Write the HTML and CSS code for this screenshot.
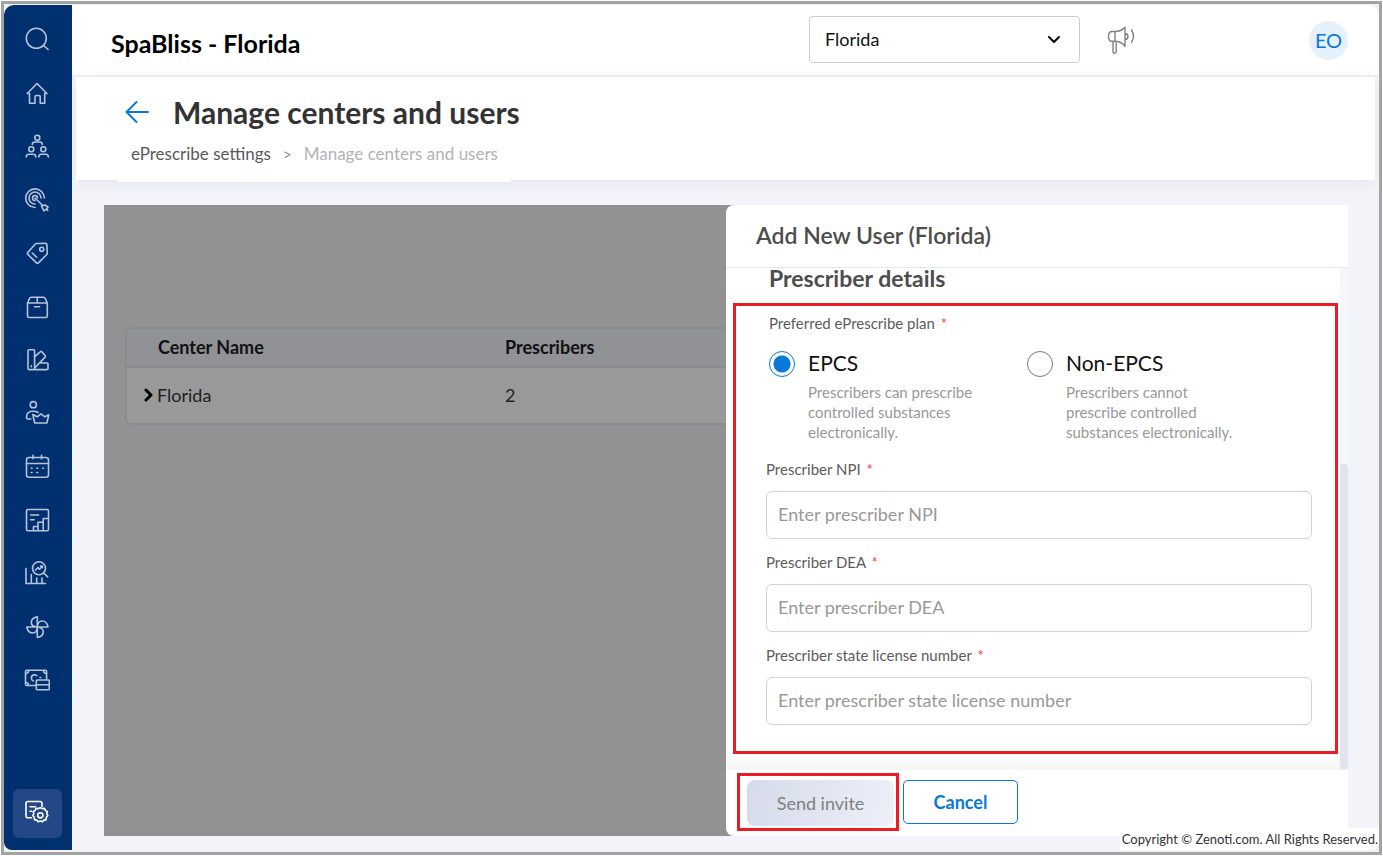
FILE: index.html
```html
<!DOCTYPE html>
<html lang="en">
<head>
<meta charset="UTF-8">
<title>Manage centers and users</title>
<link rel="stylesheet" href="styles.css">
</head>
<body>
<div class="frame">
	<aside class="sidebar">
		<nav class="nav">
			<a href="#" aria-label="Search"><svg class="icon" viewBox="0 0 26 26"><circle cx="12.3" cy="12.3" r="10"/><path d="M19.5 19.5l4.6 4"/></svg></a>
			<a href="#" aria-label="Home"><svg class="icon" viewBox="0 0 26 26"><path d="M5.5 13.5H3.3L13 3.5l9.9 10h-2.2v9.8h-4.5v-6.5q0-1.3-1.3-1.3h-2.6q-1.3 0-1.3 1.3v6.5H5.5z"/></svg></a>
			<a href="#" aria-label="Employees"><svg class="icon" viewBox="0 0 26 26"><circle cx="13.3" cy="3.7" r="2.5"/><circle cx="7.3" cy="15.2" r="2.5"/><circle cx="19.3" cy="15.2" r="2.5"/><path d="M8.3 10.5q0-2.500 2.500-2.500h5q2.500 0 2.500 2.500M2.300 23q0-2.700 2.500-2.700h4.500q2.500 0 2.500 2.700M14.800 23q0-2.700 2.500-2.700h4.500q2.500 0 2.500 2.700"/></svg></a>
			<a href="#" aria-label="Marketing"><svg class="icon" viewBox="0 0 26 26"><path d="M11 20.500a9.300 9.300 0 1 1 9.300-9.500M11 17a6 6 0 1 1 6-6M11 13.500a2.500 2.500 0 1 1 2.500-2.500M11 11l8 7.800M22.300 22l1.500 1.500M17.500 19l3.500-1 3 2-1.500 2.300-2.700 1.500z"/></svg></a>
			<a href="#" aria-label="Offers"><svg class="icon" viewBox="0 0 26 26"><path d="M12.500 3.500l9-.3q1.300 0 1.400 1.300l.4 8.500q0 1-.7 1.700l-8.200 8.200q-1 1-2 0l-8.500-8.500q-1-1 0-2l7.200-8.200q.6-.7 1.400-.7zM8.300 13l4.300 4.300"/><circle cx="17.700" cy="9.200" r="2"/></svg></a>
			<a href="#" aria-label="Inventory"><svg class="icon" viewBox="0 0 26 26"><path d="M3.500 9h19.800v13q0 1.500-1.500 1.500H5q-1.500 0-1.500-1.500zM3.500 9l2-4.500q.5-1.200 1.800-1.200h12.200q1.300 0 1.800 1.200l2 4.500M13.300 3.500V9M10.600 12.700h5"/></svg></a>
			<a href="#" aria-label="Catalog"><svg class="icon" viewBox="0 0 26 26"><path d="M4 3.800q0-1 1-1h4.600q1 0 1 1v18.800H5q-1 0-1-1zM10.600 9.800l5.600-5q.8-.8 1.600 0l3.300 3.700q.7.800 0 1.600L10.600 21M15.800 16H23q1 0 1 1v4.600q0 1-1 1H9.600M7.300 18.800v1"/></svg></a>
			<a href="#" aria-label="Guests"><svg class="icon" viewBox="0 0 26 26"><circle cx="9.300" cy="4.700" r="3.100"/><path d="M6.800 19H4.300Q2.500 19 2.500 17q0-5.800 6.500-5.800 3 0 5 1.300M8.800 14.500l4.400 2.300 3.800-3 3.800 3 4-2-2 8.200H10.700z"/></svg></a>
			<a href="#" aria-label="Appointments"><svg class="icon" viewBox="0 0 26 26"><rect x="2.500" y="3.500" width="22" height="19.800" rx="2.500"/><path d="M2.500 9.500h22M9 1.200v3.500M17.500 1.200v3.500M7.200 14.200h.8M12.800 14.200h.8M18.800 14.200h.8M7.200 18.500h.8M12.800 18.500h.8"/></svg></a>
			<a href="#" aria-label="Reports"><svg class="icon" viewBox="0 0 26 26"><rect x="2.500" y="2.500" width="22" height="21.200" rx="1.500"/><path d="M6.600 8h8M6.600 12.700h3.600M9.500 23.500v-4H14M14 23.500V15.300h5.200M19.200 23.500v-12h5"/></svg></a>
			<a href="#" aria-label="Analytics"><svg class="icon" viewBox="0 0 26 26"><path d="M2 8.500v15h19.500M7.300 14.500v9M12.700 18v5.500M18 18v5.500M19.700 13l4 3.800M11.500 10l2.500-2.500 1.500 1.700 2.800-3M16.500 6h1.800v1.800"/><circle cx="15" cy="8.300" r="6.500"/></svg></a>
			<a href="#" aria-label="Automation"><svg class="icon" viewBox="0 0 26 26"><path d="M13.300 13V2.700q-6 1-6 5.800 0 4 6 4.500zM13.300 13H24q-1-6-6-6-4.200 0-4.700 6zM13.300 13v10.500q6-1 6-5.800 0-4-6-4.700zM13.300 13H2.800q1 6 6 6 4.200 0 4.500-6z"/></svg></a>
			<a href="#" aria-label="Payments"><svg class="icon" viewBox="0 0 26 26"><path d="M11.500 18.500H2.700q-1.200 0-1.200-1.200V4.500q0-1.200 1.200-1.200h18.700q1.200 0 1.200 1.200V12M12.800 8.600q-1-.8-2.200-.8-3.200.1-3.200 3.200 0 2.300 2 3M1.700 6.500q2.800 0 3-3M19.400 3.500q.2 3 3 3M1.700 15.500q2.800 0 3 3M16 10.500h.8"/><rect x="12.300" y="13" width="13" height="9.800" rx="1"/><path d="M12.300 17.800h13"/></svg></a>
		</nav>
		<a class="settings" href="#" aria-label="Configuration"><svg class="icon" viewBox="0 0 26 26"><path d="M7.500 18.700H4q-2 0-2-2V4.500q0-2 2-2h12q2 0 2 2v3M6 7.800h5.500M6 12.200h1.800"/><path d="M16.300 8.700l2 .9 2.200-.2.9 2 1.900 1.200-.5 2.100 1 2-1.500 1.600-.2 2.300-2.200.5-1.400 1.700-2.200-.8-2.200.8-1.400-1.700-2.200-.5-.2-2.300-1.500-1.600 1-2-.5-2.100 1.900-1.200.9-2 2.200.2z"/><circle cx="16.300" cy="16.300" r="2.600"/></svg></a>
	</aside>
	<div class="main">
		<header class="topbar">
			<h2 class="brand">SpaBliss - Florida</h2>
			<div class="select-wrap">
				<select class="center-select" aria-label="Center"><option>Florida</option></select>
				<svg class="chevron" viewBox="0 0 14 10"><path d="M2 2l5 5 5-5"/></svg>
			</div>
			<button class="announce" aria-label="Announcements"><svg viewBox="0 0 28 30"><path d="M5 6.500h3v9.800H5q-3.500 0-3.500-4.900T5 6.500zM8 6.500q6 0 10-4.300v19q-4-4.900-10-4.900M6 16.500v10.300q0 1.500 1.500 1.500T9.200 26.800V16.500M18 8.500q3 .2 3 3t-3 3.200M24.500 5q4 6 0 12.500"/></svg></button>
			<button class="avatar">EO</button>
		</header>
		<section class="page-head">
			<div class="title-row">
				<a class="back" href="#" aria-label="Back"><svg viewBox="0 0 24 22"><path d="M23 11H2M11.500 1L1.500 11l10 10"/></svg></a>
				<h1 class="title">Manage centers and users</h1>
			</div>
			<div class="crumbs">
				<a href="#">ePrescribe settings</a>
				<span class="sep">&gt;</span>
				<span>Manage centers and users</span>
			</div>
		</section>
		<section class="content">
			<div class="centers">
				<table class="centers-table">
					<thead>
						<tr><th class="name">Center Name</th><th>Prescribers</th></tr>
					</thead>
					<tbody>
						<tr>
							<td><button class="expand"><svg viewBox="0 0 10 14"><path d="M2 2l5 5-5 5"/></svg>Florida</button></td>
							<td>2</td>
						</tr>
					</tbody>
				</table>
			</div>
			<form class="drawer">
				<h2 class="drawer-head">Add New User (Florida)</h2>
				<div class="drawer-body">
					<div class="drawer-scroll">
						<h3 class="section-title">Prescriber details</h3>
						<div class="details marked">
							<div class="plan-group">
								<div class="field-label" id="plan">Preferred ePrescribe plan <span class="req">*</span></div>
								<div class="plans" role="radiogroup" aria-labelledby="plan">
									<label class="plan">
										<input type="radio" name="plan" checked>
										<span class="plan-name">EPCS</span>
										<span class="plan-text">Prescribers can prescribe controlled substances electronically.</span>
									</label>
									<label class="plan">
										<input type="radio" name="plan">
										<span class="plan-name">Non-EPCS</span>
										<span class="plan-text">Prescribers cannot prescribe controlled substances electronically.</span>
									</label>
								</div>
							</div>
							<div class="field">
								<label class="field-label" for="npi">Prescriber NPI <span class="req">*</span></label>
								<input class="text" type="text" id="npi" placeholder="Enter prescriber NPI">
							</div>
							<div class="field">
								<label class="field-label" for="dea">Prescriber DEA <span class="req">*</span></label>
								<input class="text" type="text" id="dea" placeholder="Enter prescriber DEA">
							</div>
							<div class="field">
								<label class="field-label" for="license">Prescriber state license number <span class="req">*</span></label>
								<input class="text" type="text" id="license" placeholder="Enter prescriber state license number">
							</div>
						</div>
					</div>
					<div class="track"><div class="thumb"></div></div>
				</div>
				<div class="drawer-foot">
					<div class="send-wrap marked"><button type="submit" class="send" disabled>Send invite</button></div>
					<button type="button" class="cancel">Cancel</button>
				</div>
			</form>
		</section>
	</div>
	<footer class="copyright">Copyright © Zenoti.com. All Rights Reserved.</footer>
</div>
</body>
</html>
```
FILE: styles.css
```css
*{
	box-sizing: border-box;
}
body{
	margin: 0;
	padding: 1px;
	background: #fff;
	font-family: Lato, "Liberation Sans", sans-serif;
	color: #333;
}
h1, h2, h3{
	margin: 0;
}
a{
	color: inherit;
	text-decoration: none;
}
button, input, select{
	font-family: inherit;
}
button{
	padding: 0;
	border: 0;
	background: none;
	cursor: pointer;
}
svg{
	display: block;
	fill: none;
	stroke: currentColor;
	stroke-linecap: round;
	stroke-linejoin: round;
}
.frame{
	position: relative;
	display: flex;
	min-height: calc(100vh - 2px);
	padding: 1px 0 2px;
	border: 3px solid #a1a4a2;
	background: #f1f1f1;
}

/* sidebar */
.sidebar{
	display: flex;
	flex-direction: column;
	align-items: center;
	flex: none;
	width: 68px;
	padding: 21px 2px 12px 0;
	border-radius: 10px 0 0 8px;
	background: #00306f;
	color: #b5c3d9;
}
.nav{
	display: flex;
	flex: 1;
	flex-direction: column;
	justify-content: space-between;
	margin-bottom: 96px;
}
.nav a:first-child{
	padding-bottom: 1px;
}
.icon{
	width: 26px;
	height: 26px;
	stroke-width: 1.6;
}
.settings{
	display: flex;
	align-items: center;
	justify-content: center;
	width: 49px;
	height: 49px;
	padding-bottom: 4px;
	border-radius: 6px;
	background: #234887;
	color: #fff;
}

/* top bar */
.main{
	display: flex;
	flex: 1;
	flex-direction: column;
	min-width: 0;
	border-radius: 0 10px 8px 0;
	overflow: hidden;
	background: #f3f4fa;
}
.topbar{
	display: flex;
	align-items: center;
	height: 72px;
	padding: 0 31px 0 39px;
	border-bottom: 2px solid #eeeff5;
	background: #fff;
}
.brand{
	flex: 1;
	padding-top: 6px;
	font-size: 25px;
	font-weight: 700;
	color: #000;
}
.select-wrap{
	position: relative;
	width: 271px;
	margin-bottom: 2px;
}
.center-select{
	display: block;
	width: 100%;
	height: 47px;
	padding: 0 15px;
	border: 1px solid #ccc;
	border-radius: 4px;
	background: #fff;
	font-size: 18px;
	color: #111;
	appearance: none;
}
.chevron{
	position: absolute;
	top: 19px;
	right: 19px;
	width: 14px;
	height: 10px;
	stroke: #000;
	stroke-width: 2;
	pointer-events: none;
}
.announce{
	margin: 0 174px 0 27px;
	color: #808080;
}
.announce svg{
	width: 28px;
	height: 30px;
	stroke-width: 1.4;
}
.avatar{
	width: 39px;
	height: 39px;
	border-radius: 50%;
	background: #e4f1fb;
	font-size: 20px;
	color: #0879d9;
}

/* page heading */
.page-head{
	height: 103px;
	margin: 0 4px;
	padding: 15px 49px;
	background: #fff;
	box-shadow: 0 4px 14px #e6e7ee;
}
.title-row{
	display: flex;
	align-items: center;
	gap: 24px;
}
.back{
	color: #0879d9;
}
.back svg{
	width: 24px;
	height: 22px;
	stroke-width: 2;
}
.title{
	font-size: 30px;
	line-height: 40px;
	font-weight: 700;
}
.crumbs{
	display: flex;
	gap: 12px;
	width: fit-content;
	margin-left: -7px;
	padding: 10px 12px 16px 13px;
	background: #fff;
	font-size: 17px;
	line-height: 24px;
	color: #b3b3b3;
}
.crumbs a{
	color: #595959;
}
.sep{
	font-size: 15px;
	color: #8c8c8c;
}

/* centers list under the open drawer */
.content{
	display: flex;
	flex: 1;
	margin: 25px 31px 14px 32px;
}
.centers{
	flex: 1;
	min-width: 0;
	margin-right: -8px;
	padding: 122px 0 0 21px;
	background: #929294;
}
.centers-table{
	width: 100%;
	border: 2px solid #8b8b8e;
	border-right: 0;
	border-radius: 6px 0 0 6px;
	border-spacing: 0;
	background: #999;
	font-size: 18px;
	text-align: left;
	color: #1f1f1f;
}
.centers-table th{
	height: 39px;
	padding: 0 0 2px;
	border-bottom: 2px solid #8b8b8e;
	background: #919296;
	font-weight: 700;
	color: #111;
}
.centers-table .name{
	width: 378px;
	padding-left: 31px;
}
.centers-table td{
	height: 55px;
	padding: 0 0 2px;
}
.expand{
	display: flex;
	align-items: center;
	gap: 3px;
	padding-left: 17px;
	font-size: 18px;
	color: #1f1f1f;
}
.expand svg{
	width: 10px;
	height: 14px;
	stroke: #000;
	stroke-width: 3;
}

/* drawer */
.drawer{
	position: relative;
	display: flex;
	flex: 0 0 50%;
	flex-direction: column;
	min-width: 0;
	border-radius: 8px 0 0 8px;
	background: #fff;
}
.marked{
	border: 3px solid #ed1c24;
}
.drawer-head{
	padding: 15px 30px 17px;
	border-bottom: 1px solid #e3e5f0;
	font-size: 23px;
	line-height: 30px;
	font-weight: 600;
	color: #4d4d4d;
}
.drawer-body{
	display: flex;
	flex: 1;
}
.drawer-scroll{
	flex: 1;
	padding: 0 2px 15px 7px;
	background: linear-gradient(#fff, #fff 97%, #f5f5f5);
}
.section-title{
	padding: 0 36px 15px;
	font-size: 23px;
	line-height: 20px;
	font-weight: 700;
	color: #4d4d4d;
}
.details{
	padding: 7px 23px 26px 30px;
}
.plan-group{
	padding: 0 3px;
}
.field-label{
	display: block;
	font-size: 15px;
	line-height: 20px;
	color: #5c5c5c;
}
.req{
	margin-left: 2px;
	color: #f44336;
}
.plans{
	display: grid;
	grid-template-columns: 258px 258px;
	padding: 18px 0 17px;
}
.plan{
	display: grid;
	grid-template-columns: 26px 180px;
	column-gap: 13px;
	align-items: center;
	row-gap: 5px;
}
.plan input{
	width: 26px;
	height: 26px;
	margin: 0;
	border: 1px solid #757575;
	border-radius: 50%;
	background: #fff;
	appearance: none;
}
.plan input:checked{
	border-color: #0879d9;
	background: radial-gradient(#0879d9 8px, #fff 9px);
}
.plan-name{
	padding-bottom: 2px;
	font-size: 21px;
	line-height: 24px;
	color: #111;
}
.plan-text{
	grid-column: 2;
	font-size: 15px;
	line-height: 20px;
	color: #999;
}
.field + .field{
	margin-top: 13px;
}
.text{
	width: 100%;
	height: 48px;
	margin-top: 12px;
	padding: 0 11px 2px;
	border: 1px solid #ced3e0;
	border-radius: 6px;
	font-size: 18px;
}
.text::placeholder{
	color: #999;
}
.track{
	display: flex;
	align-items: flex-end;
	width: 8px;
	background: #f5f6fa;
}
.thumb{
	width: 8px;
	height: 61%;
	border-radius: 4px;
	background: #e1e4ed;
}
.drawer-foot{
	display: flex;
	align-items: center;
	gap: 4px;
	padding: 3px 11px 5px;
}
.send-wrap{
	padding: 4px 2px 2px 7px;
}
.send{
	width: 147px;
	height: 46px;
	border-radius: 8px;
	background: linear-gradient(100deg, #d5dbe9, #edf0f9);
	font-size: 18px;
	color: #808080;
}
.cancel{
	width: 115px;
	height: 44px;
	border: 1px solid #0879d9;
	border-radius: 5px;
	background: #fff;
	font-size: 18px;
	font-weight: 700;
	color: #0879d9;
}
.copyright{
	position: absolute;
	right: 0;
	bottom: 2px;
	padding: 0 1px 0 2px;
	border-radius: 0 0 8px 0;
	background: #fff;
	font-size: 13px;
	line-height: 22px;
	color: #333;
}
```
